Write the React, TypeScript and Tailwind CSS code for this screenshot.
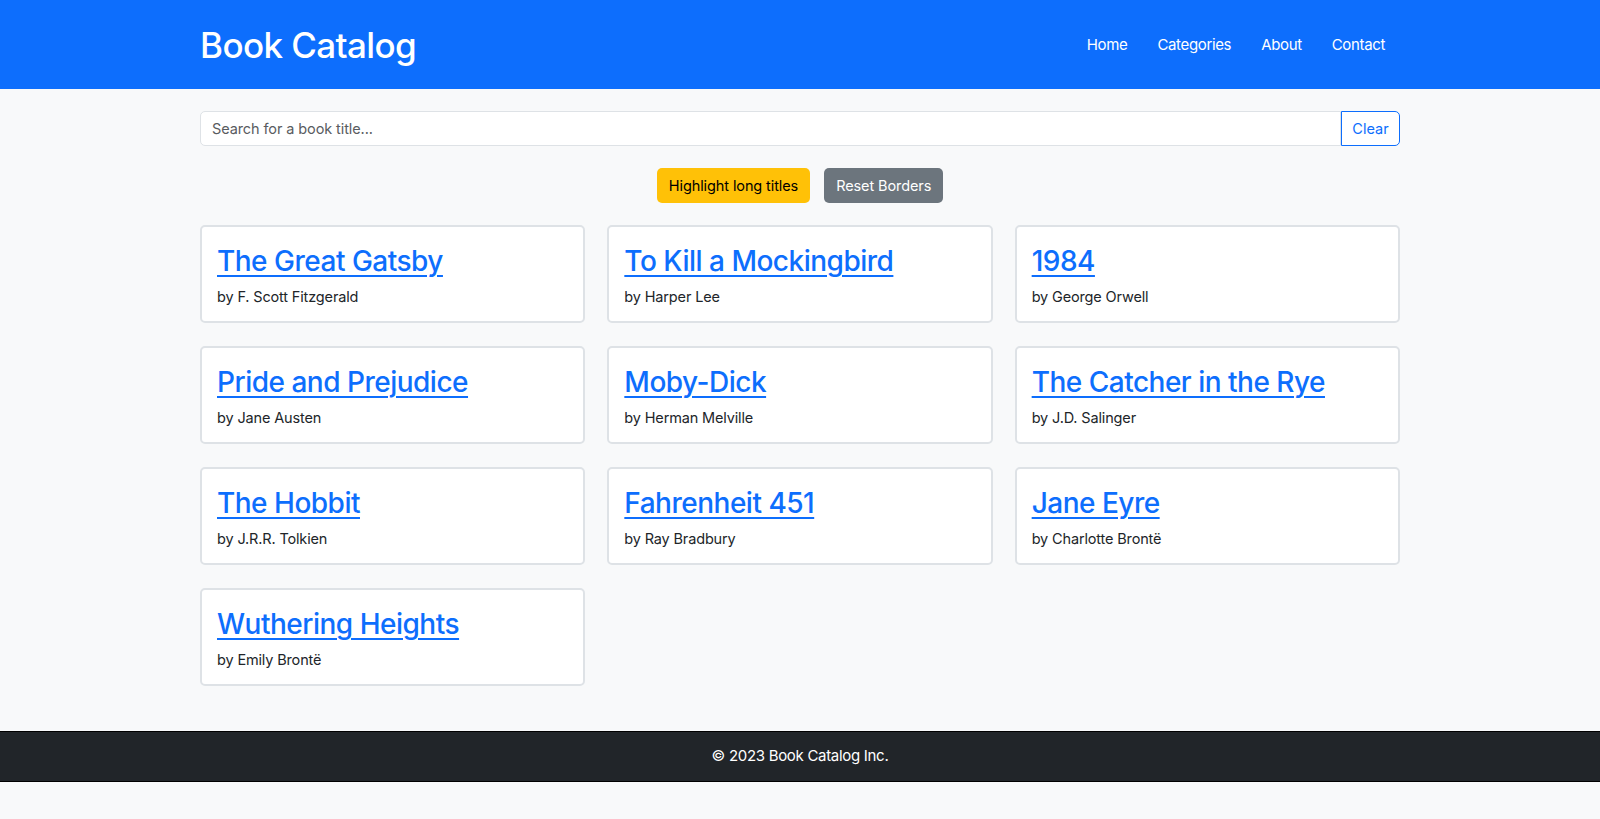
const books = [
  { title: "The Great Gatsby", author: "F. Scott Fitzgerald" },
  { title: "To Kill a Mockingbird", author: "Harper Lee" },
  { title: "1984", author: "George Orwell" },
  { title: "Pride and Prejudice", author: "Jane Austen" },
  { title: "Moby-Dick", author: "Herman Melville" },
  { title: "The Catcher in the Rye", author: "J.D. Salinger" },
  { title: "The Hobbit", author: "J.R.R. Tolkien" },
  { title: "Fahrenheit 451", author: "Ray Bradbury" },
  { title: "Jane Eyre", author: "Charlotte Brontë" },
  { title: "Wuthering Heights", author: "Emily Brontë" },
];

function BookCard({ title, author }: { title: string; author: string }) {
  return (
    <div className="h-[98px] rounded-[5px] border-2 border-[#dee2e6] bg-white px-[15px] pt-[16px]">
      <a
        href="#"
        className="text-[28px] font-medium leading-[36px] tracking-[-0.5px] text-[#0d6efd] underline decoration-[2px] underline-offset-[4px]"
      >
        {title}
      </a>
      <p className="mt-[8px] text-[14.5px] leading-[20px] tracking-[-0.15px] text-[#212529]">by {author}</p>
    </div>
  );
}

export default function App() {
  return (
    <div className="min-h-[819px] bg-[#f8f9fa] font-['Inter','Liberation_Sans',sans-serif]">
      <header className="h-[89px] bg-[#0d6efd]">
        <div className="mx-auto flex h-full w-[1200px] items-center justify-between pt-[2px]">
          <h1 className="text-[35px] font-medium tracking-[-0.6px] text-white">Book Catalog</h1>
          <nav className="flex gap-[30px] pr-[15px] text-[15px] tracking-[-0.35px] text-white">
            <a href="#">Home</a>
            <a href="#">Categories</a>
            <a href="#">About</a>
            <a href="#">Contact</a>
          </nav>
        </div>
      </header>

      <main className="mx-auto w-[1200px] pt-[22px] pb-[45px]">
        <div className="flex h-[35px]">
          <input
            className="flex-1 rounded-l-[5px] border border-[#dee2e6] bg-white px-[11px] text-[14.5px] tracking-[-0.1px] text-[#212529] placeholder:text-[#595c5f] outline-none"
            placeholder="Search for a book title..."
          />
          <button className="w-[59px] rounded-r-[5px] border border-[#0d6efd] bg-white text-[14.5px] text-[#0d6efd]">
            Clear
          </button>
        </div>

        <div className="mt-[22px] flex justify-center gap-[14px] tracking-[-0.1px]">
          <button className="h-[35px] rounded-[5px] bg-[#ffc107] px-[12px] text-[14.5px] text-black">
            Highlight long titles
          </button>
          <button className="h-[35px] rounded-[5px] bg-[#6c757d] px-[12px] text-[14.5px] text-white">
            Reset Borders
          </button>
        </div>

        <div className="mt-[22px] grid grid-cols-3 gap-x-[22px] gap-y-[23px]">
          {books.map((b) => (
            <BookCard key={b.title} {...b} />
          ))}
        </div>
      </main>

      <footer className="flex h-[51px] items-center justify-center border-y border-black bg-[#212529] text-[15px] tracking-[-0.3px] text-white">
        © 2023 Book Catalog Inc.
      </footer>
    </div>
  );
}
